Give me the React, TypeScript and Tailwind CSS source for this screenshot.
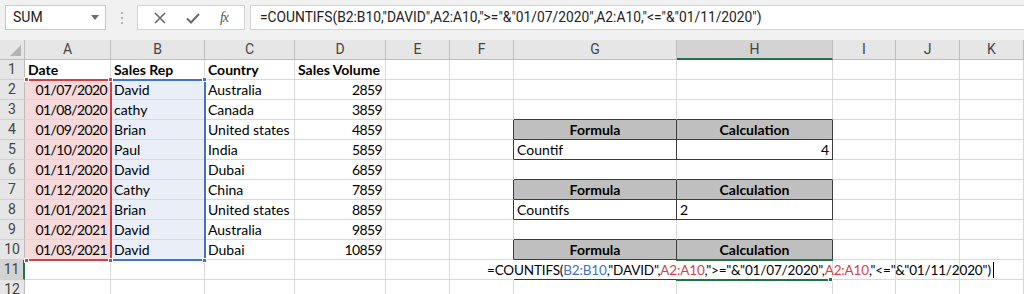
import React from 'react';

const GRID = '#d9d9d9';
const HEAD_LINE = '#bdbdbd';
const DARK = '#3c3c3c';

const cellFont = { fontFamily: 'Lato, "Liberation Sans", sans-serif' };
const uiFont = { fontFamily: 'Roboto, "Noto Sans", sans-serif' };

const colLetters = ['A', 'B', 'C', 'D', 'E', 'F', 'G', 'H', 'I', 'J', 'K'];

type CellData = { text?: string; bold?: boolean; align?: 'left' | 'right' | 'center'; num?: boolean };

const data: Record<number, Record<number, CellData>> = {
  1: {
    1: { text: 'Date', bold: true },
    2: { text: 'Sales Rep', bold: true },
    3: { text: 'Country', bold: true },
    4: { text: 'Sales Volume', bold: true },
  },
  4: { 7: { text: 'Formula', bold: true, align: 'center' }, 8: { text: 'Calculation', bold: true, align: 'center' } },
  5: { 7: { text: 'Countif' }, 8: { text: '4', align: 'right' } },
  7: { 7: { text: 'Formula', bold: true, align: 'center' }, 8: { text: 'Calculation', bold: true, align: 'center' } },
  8: { 7: { text: 'Countifs' }, 8: { text: '2' } },
  10: { 7: { text: 'Formula', bold: true, align: 'center' }, 8: { text: 'Calculation', bold: true, align: 'center' } },
};

const sales = [
  ['01/07/2020', 'David', 'Australia', '2859'],
  ['01/08/2020', 'cathy', 'Canada', '3859'],
  ['01/09/2020', 'Brian', 'United states', '4859'],
  ['01/10/2020', 'Paul', 'India', '5859'],
  ['01/11/2020', 'David', 'Dubai', '6859'],
  ['01/12/2020', 'Cathy', 'China', '7859'],
  ['01/01/2021', 'Brian', 'United states', '8859'],
  ['01/02/2021', 'David', 'Australia', '9859'],
  ['01/03/2021', 'David', 'Dubai', '10859'],
];
sales.forEach((s, i) => {
  const r = i + 2;
  data[r] = {
    ...(data[r] || {}),
    1: { text: s[0], align: 'right', num: true },
    2: { text: s[1] },
    3: { text: s[2] },
    4: { text: s[3], align: 'right', num: true },
  };
});

const tableRows = [4, 5, 7, 8, 10];
const headRows = [4, 7, 10];

function cellStyle(r: number, c: number): React.CSSProperties {
  let right = GRID;
  let bottom = GRID;
  if (c >= 6 && c <= 8 && tableRows.includes(r)) right = DARK;
  if ((c === 7 || c === 8) && [3, 4, 5, 6, 7, 8, 9, 10].includes(r)) bottom = DARK;
  if (c === 7 && r === 11) bottom = DARK;
  if (r === 11 && (c === 6 || c === 7)) right = 'transparent';
  return { borderRightColor: right, borderBottomColor: bottom };
}

const FormulaText = () => (
  <>
    =COUNTIFS(<span className="text-[#3f72c7]">B2:B10</span>,"DAVID",
    <span className="text-[#d2454c]">A2:A10</span>,"&gt;="&amp;"01/07/2020",
    <span className="text-[#d2454c]">A2:A10</span>,"&lt;="&amp;"01/11/2020")
  </>
);

const FormulaBar = () => (
  <div className="h-10 bg-[#f1f1f1] flex items-start pt-[5px] pl-[5px]" style={uiFont}>
    <div className="w-[101px] h-[25px] bg-white border border-[#c8c8c8] flex items-center justify-between pl-[7px] pr-[6px] text-[14px] text-[#222]">
      <span>SUM</span>
      <svg width="8" height="5" viewBox="0 0 8 5"><path d="M0 0h8L4 5z" fill="#6b6b6b" /></svg>
    </div>
    <div className="w-[31px] h-[25px] flex flex-col items-center justify-center gap-[3px]">
      <span className="w-[2px] h-[2px] bg-[#b3b3b3]" />
      <span className="w-[2px] h-[2px] bg-[#b3b3b3]" />
      <span className="w-[2px] h-[2px] bg-[#b3b3b3]" />
    </div>
    <div className="w-[108px] h-[25px] bg-white border border-[#d3d3d3] flex items-center justify-around px-[6px]">
      <svg width="12" height="12" viewBox="0 0 12 12">
        <path d="M1 1l10 10M11 1L1 11" stroke="#6a6a6a" strokeWidth="1.6" />
      </svg>
      <svg width="14" height="12" viewBox="0 0 14 12">
        <path d="M1 6.5l4 4L13 2" stroke="#6a6a6a" strokeWidth="2" fill="none" />
      </svg>
      <span className="italic text-[14px] text-[#555] tracking-[-1px]" style={{ fontFamily: '"Liberation Serif", serif' }}>
        fx
      </span>
    </div>
    <div className="ml-[5px] flex-1 h-[25px] bg-white border border-[#d3d3d3] border-r-0 flex items-center pl-[9px] text-[13.8px] text-[#222] whitespace-nowrap overflow-hidden">
      =COUNTIFS(B2:B10,"DAVID",A2:A10,"&gt;="&amp;"01/07/2020",A2:A10,"&lt;="&amp;"01/11/2020")
    </div>
  </div>
);

const Corner = ({ x, y, color }: { x: number; y: number; color: string }) => (
  <div className="absolute w-[5px] h-[5px] border border-white" style={{ left: x, top: y, background: color }} />
);

export default function App() {
  const rows = Array.from({ length: 12 }, (_, i) => i + 1);
  return (
    <div className="w-[1024px] h-[294px] overflow-hidden bg-white">
      <FormulaBar />
      <div className="relative">
        <div className="grid grid-cols-[25px_86px_94px_90px_91px_64px_64px_163px_156px_63px_64px_64px] auto-rows-[20px]">
          <div className="bg-[#e6e6e6] border-r border-b border-r-[#bdbdbd] border-b-[#bdbdbd] flex items-end justify-end pr-[3px] pb-[3px]">
            <svg width="11" height="11" viewBox="0 0 11 11"><path d="M11 0v11H0z" fill="#b4b4b4" /></svg>
          </div>
          {colLetters.map((l, i) => (
            <div
              key={l}
              className={`border-r border-b flex items-center justify-center text-[14px] text-[#444] ${
                i === 7 ? 'bg-[#d3d3d3] border-b-2 border-b-[#217346]' : 'bg-[#e6e6e6] border-b-[#bdbdbd]'
              }`}
              style={{ ...uiFont, borderRightColor: HEAD_LINE }}
            >
              {l}
            </div>
          ))}
          {rows.map((r) => (
            <React.Fragment key={r}>
              <div
                className={`border-b flex items-center justify-center text-[14px] text-[#444] ${
                  r === 11 ? 'bg-[#d3d3d3] border-r-2 border-r-[#217346]' : 'bg-[#e6e6e6] border-r border-r-[#bdbdbd]'
                }`}
                style={{ ...uiFont, borderBottomColor: '#d0d0d0' }}
              >
                {r}
              </div>
              {colLetters.map((_, ci) => {
                const c = ci + 1;
                const d = data[r]?.[c];
                const inRange = r >= 2 && r <= 10;
                let bg = '';
                if (inRange && c === 1) bg = 'bg-[#f6d9da]';
                if (inRange && c === 2) bg = 'bg-[#e9eef7]';
                if (headRows.includes(r) && (c === 7 || c === 8)) bg = 'bg-[#bfbfbf]';
                if (r === 11 && c === 6) {
                  return (
                    <div
                      key={c}
                      className="relative z-10 border-r border-b pl-[37px] text-[13.5px] tracking-[-0.15px] leading-[20px] text-black whitespace-nowrap overflow-visible"
                      style={{ ...cellFont, ...cellStyle(r, c) }}
                    >
                      <FormulaText />
                      <span className="inline-block w-px h-[16px] bg-black ml-[2px] align-[-3px]" />
                    </div>
                  );
                }
                return (
                  <div
                    key={c}
                    className={`border-r border-b px-[3px] text-[14px] leading-[20px] text-black whitespace-nowrap overflow-hidden ${bg} ${
                      d?.bold ? 'font-bold' : ''
                    } ${d?.num ? 'tracking-[-0.6px]' : ''} ${
                      d?.align === 'right' ? 'text-right' : d?.align === 'center' ? 'text-center' : 'text-left'
                    }`}
                    style={{ ...cellFont, ...cellStyle(r, c) }}
                  >
                    {d?.text}
                  </div>
                );
              })}
            </React.Fragment>
          ))}
        </div>

        {/* range highlights */}
        <div className="absolute left-[111px] top-[39px] w-[95px] h-[182px] border-t-2 border-r-2 border-b-2 border-[#4173cc]" />
        <div className="absolute left-[25px] top-[39px] w-[87px] h-[182px] border-t-2 border-r-2 border-b-2 border-[#cc4249]" />
        <Corner x={24} y={37} color="#cc4249" />
        <Corner x={108} y={37} color="#cc4249" />
        <Corner x={202} y={37} color="#4173cc" />
        <Corner x={24} y={218} color="#cc4249" />
        <Corner x={108} y={218} color="#cc4249" />
        <Corner x={202} y={218} color="#4173cc" />

        {/* active cell */}
        <div className="absolute left-[676px] top-[219px] w-[157px] h-[22px] border-t-2 border-b-2 border-[#217346]" />
        <Corner x={828} y={237} color="#217346" />
      </div>
    </div>
  );
}
